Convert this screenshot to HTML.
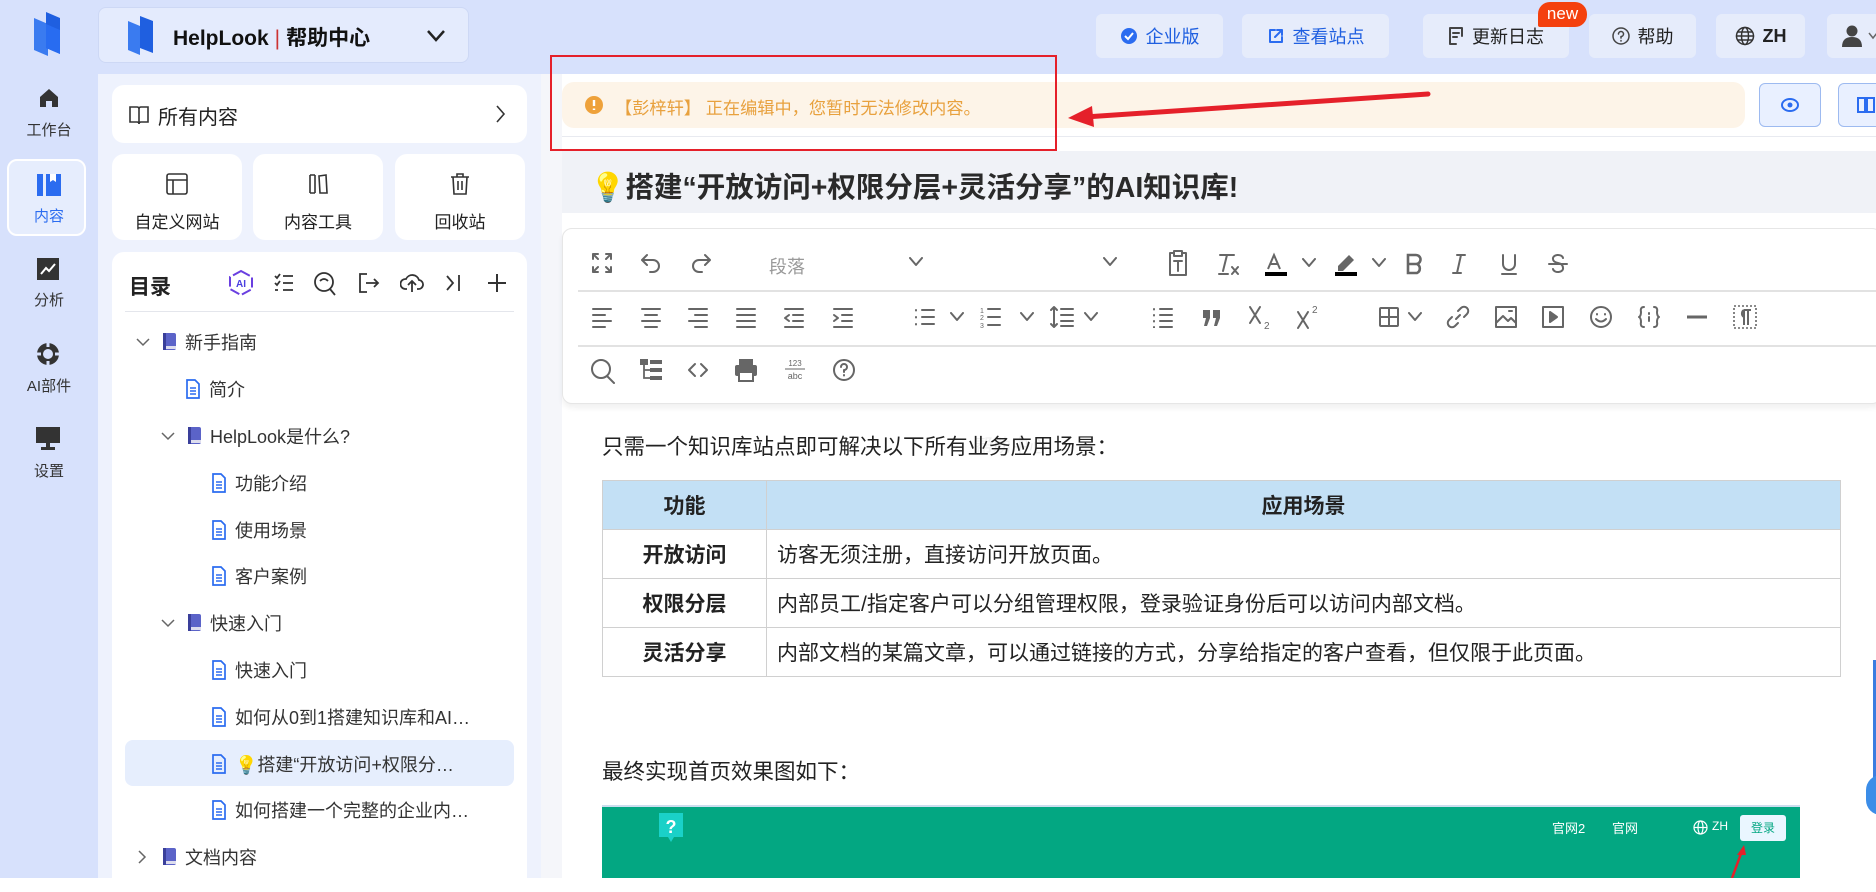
<!DOCTYPE html>
<html><head><meta charset="utf-8">
<style>
*{box-sizing:border-box;margin:0;padding:0}
body{width:1876px;height:878px;overflow:hidden;position:relative;background:#fff;font-family:"Liberation Sans","Noto Sans CJK SC",sans-serif;color:#222}
.a{position:absolute}
.rail{left:0;top:0;width:98px;height:878px;background:#d7e1fc}
.top{left:98px;top:0;width:1778px;height:74px;background:#d7e1fc}
.ri{width:98px;text-align:center;font-size:15px;color:#333}
.hb{top:14px;height:44px;background:#e6ecfb;border-radius:6px;font-size:18px;display:flex;align-items:center;justify-content:center;gap:8px;color:#222}
.side{left:98px;top:74px;width:443px;height:804px;background:#eef2fd}
.card{background:#fff;border-radius:12px}
.tr{height:46.8px;display:flex;align-items:center;font-size:18px;color:#333;white-space:nowrap}
.tb svg{position:absolute}
.ic{stroke:#666;fill:none;stroke-width:2;stroke-linecap:round;stroke-linejoin:round}
table{border-collapse:collapse;font-size:21px}
td{border:1.5px solid #d0d0d0;height:49px;padding:0 10px}
</style></head><body>
<div class="a rail"></div>
<div class="a top"></div>
<svg class="a" style="left:28px;top:10px" width="40" height="50" viewBox="0 0 40 50"><path d="M6 8 L20 14 L20 46 L6 40Z" fill="#3a7bf0"/><path d="M18 2 L32 8 L32 44 L18 38Z" fill="#1f5fe0"/><path d="M18 14 L32 20 L32 44 L18 38Z" fill="#2a6ff5" opacity=".8"/></svg>
<svg class="a" style="left:37px;top:86px" width="24" height="24" viewBox="0 0 24 24"><path d="M3 11 L12 3 L21 11 V21 H15 V15 H9 V21 H3Z" fill="#333"/></svg>
<div class="a ri" style="top:119px">工作台</div>
<div class="a" style="left:7px;top:159px;width:79px;height:77px;background:#e6edfd;border:2px solid #fff;border-radius:10px"></div>
<svg class="a" style="left:35px;top:172px" width="28" height="26" viewBox="0 0 28 26"><rect x="2" y="2" width="6" height="22" fill="#2b6cf0"/><path d="M11 2 H26 V24 H11Z" fill="#2b6cf0"/><path d="M15 2 V10 L18 8 L21 10 V2" fill="#fff"/></svg>
<div class="a ri" style="top:205px;color:#2b6cf0">内容</div>
<svg class="a" style="left:36px;top:257px" width="24" height="24" viewBox="0 0 24 24"><rect x="1" y="1" width="22" height="22" fill="#333"/><path d="M5 17 L10 11 L13 14 L19 7" stroke="#fff" stroke-width="2" fill="none"/></svg>
<div class="a ri" style="top:289px">分析</div>
<svg class="a" style="left:35px;top:341px" width="26" height="26" viewBox="0 0 26 26"><circle cx="13" cy="13" r="11" fill="#333"/><circle cx="13" cy="13" r="5" fill="#d7e1fc"/><path d="M13 0 V6 M13 20 V26 M0 13 H6 M20 13 H26" stroke="#d7e1fc" stroke-width="3"/></svg>
<div class="a ri" style="top:375px">AI部件</div>
<svg class="a" style="left:35px;top:425px" width="26" height="26" viewBox="0 0 26 26"><rect x="1" y="2" width="24" height="16" fill="#333"/><rect x="11" y="18" width="4" height="4" fill="#333"/><rect x="6" y="22" width="14" height="3" fill="#333"/></svg>
<div class="a ri" style="top:460px">设置</div>

<div class="a" style="left:98px;top:7px;width:371px;height:56px;background:#e4ebfd;border:1px solid #cdd8f5;border-radius:8px"></div>
<svg class="a" style="left:124px;top:15px" width="34" height="42" viewBox="0 0 34 42"><path d="M4 6 L16 11 L16 40 L4 35Z" fill="#3a7bf0"/><path d="M16 1 L29 6 L29 38 L16 33Z" fill="#1f5fe0"/></svg>
<div class="a" style="left:173px;top:22px;font-size:21px;font-weight:bold;color:#111">HelpLook<span style="font-weight:normal;color:#c33;margin:0 6px">|</span>帮助中心</div>
<svg class="a" style="left:425px;top:28px" width="22" height="16" viewBox="0 0 22 16"><path d="M3 3 L11 12 L19 3" stroke="#222" stroke-width="2.5" fill="none"/></svg>

<div class="a hb" style="left:1096px;width:127px;color:#1f5fe0"><svg width="18" height="18"><circle cx="9" cy="9" r="8" fill="#2b6cf0"/><path d="M5 9 L8 12 L13 6" stroke="#fff" stroke-width="2" fill="none"/></svg>企业版</div>
<div class="a hb" style="left:1242px;width:147px;color:#1f5fe0"><svg width="18" height="18" class="ic" style="stroke:#2b6cf0"><path d="M8 3 H3 V15 H15 V10 M10 3 H15 V8 M15 3 L8 10"/></svg>查看站点</div>
<div class="a hb" style="left:1423px;width:146px"><svg width="16" height="20" class="ic" style="stroke:#444"><path d="M2 2 H14 V10 M2 2 V18 H8 M5 7 H11 M5 11 H9"/></svg>更新日志</div>
<div class="a" style="left:1538px;top:2px;width:49px;height:25px;background:#f4400e;border-radius:12px 12px 12px 2px;color:#fff;font-size:17px;text-align:center;line-height:24px">new</div>
<div class="a hb" style="left:1589px;width:107px"><svg width="18" height="18" class="ic" style="stroke:#444;stroke-width:1.5"><circle cx="9" cy="9" r="8"/><path d="M6.5 7 A2.5 2.5 0 1 1 9 9.5 V11 M9 13.5 V14"/></svg>帮助</div>
<div class="a hb" style="left:1716px;width:89px;font-weight:bold"><svg width="20" height="20" class="ic" style="stroke:#333;stroke-width:1.5"><circle cx="10" cy="10" r="8.5"/><ellipse cx="10" cy="10" rx="3.5" ry="8.5"/><path d="M1.5 10 H18.5 M3 6 H17 M3 14 H17"/></svg>ZH</div>
<div class="a hb" style="left:1827px;width:60px;justify-content:flex-start;padding-left:14px;gap:4px"><svg width="22" height="24"><circle cx="11" cy="7" r="5.5" fill="#444"/><path d="M1 23 Q1 13 11 13 Q21 13 21 23Z" fill="#444"/></svg><svg width="12" height="10"><path d="M2 2 L6 7 L10 2" stroke="#666" stroke-width="1.5" fill="none"/></svg></div>

<div class="a side"></div>
<div class="a card" style="left:112px;top:85px;width:415px;height:58px"></div>
<svg class="a" style="left:128px;top:104px" width="22" height="22"><path d="M2 3 H9 Q11 3 11 5 V20 Q11 18 9 18 H2Z M20 3 H13 Q11 3 11 5 V20 Q11 18 13 18 H20Z" stroke="#333" stroke-width="1.6" fill="none"/></svg>
<div class="a" style="left:158px;top:101px;font-size:20px;color:#222">所有内容</div>
<svg class="a" style="left:494px;top:104px" width="12" height="20"><path d="M3 2 L10 10 L3 18" stroke="#333" stroke-width="1.6" fill="none"/></svg>

<div class="a card" style="left:112px;top:154px;width:130px;height:86px"></div>
<div class="a card" style="left:253px;top:154px;width:130px;height:86px"></div>
<div class="a card" style="left:395px;top:154px;width:130px;height:86px"></div>
<svg class="a" style="left:165px;top:172px" width="24" height="24"><rect x="2" y="2" width="20" height="20" rx="2" stroke="#333" stroke-width="1.6" fill="none"/><path d="M2 8 H22 M8 8 V22" stroke="#333" stroke-width="1.6"/></svg>
<svg class="a" style="left:306px;top:172px" width="24" height="24"><path d="M4 3 V21 M9 3 V21 M13 4 L20 3 L21 21 L14 21Z M4 3 H9 M4 21 H9" stroke="#333" stroke-width="1.6" fill="none"/></svg>
<svg class="a" style="left:448px;top:172px" width="24" height="24"><path d="M3 5 H21 M9 5 V2 H15 V5 M5 5 L6 22 H18 L19 5 M10 9 V18 M14 9 V18" stroke="#333" stroke-width="1.6" fill="none"/></svg>
<div class="a" style="left:112px;top:208px;width:130px;text-align:center;font-size:17px">自定义网站</div>
<div class="a" style="left:253px;top:208px;width:130px;text-align:center;font-size:17px">内容工具</div>
<div class="a" style="left:395px;top:208px;width:130px;text-align:center;font-size:17px">回收站</div>

<div class="a card" style="left:112px;top:252px;width:415px;height:640px"></div>
<div class="a" style="left:129px;top:271px;font-size:21px;font-weight:bold">目录</div>
<svg class="a" style="left:227px;top:269px" width="28" height="28"><path d="M14 2 L25 8 V20 L14 26 L3 20 V8Z" stroke="#6a3fe0" stroke-width="2" fill="none" stroke-dasharray="10 3"/><text x="14" y="18" font-size="10" font-weight="bold" text-anchor="middle" fill="#4a3fe0" font-family="Liberation Sans">AI</text></svg>
<svg class="a" style="left:272px;top:271px" width="24" height="24"><path d="M3 5 L5 7 L8 3 M11 5 H21 M11 12 H21 M11 19 H21 M3 12 L5 14 L8 10 M3 19 H6" stroke="#333" stroke-width="1.8" fill="none"/></svg>
<svg class="a" style="left:313px;top:271px" width="24" height="26"><circle cx="11" cy="11" r="9" stroke="#333" stroke-width="1.8" fill="none"/><path d="M17 18 L22 24 M7 10 Q11 6 15 10" stroke="#333" stroke-width="1.8" fill="none"/></svg>
<svg class="a" style="left:357px;top:271px" width="24" height="24"><path d="M10 3 H3 V21 H10 M9 12 H21 M17 8 L21 12 L17 16" stroke="#333" stroke-width="1.8" fill="none"/></svg>
<svg class="a" style="left:400px;top:271px" width="24" height="24"><path d="M7 18 H5 A5 5 0 0 1 6 8 A7 7 0 0 1 19 9 A4 4 0 0 1 18 18 H17 M12 21 V11 M8 14 L12 10 L16 14" stroke="#333" stroke-width="1.8" fill="none"/></svg>
<svg class="a" style="left:443px;top:271px" width="22" height="24"><path d="M4 5 L10 12 L4 19 M16 4 V20" stroke="#333" stroke-width="1.8" fill="none"/></svg>
<svg class="a" style="left:486px;top:272px" width="22" height="22"><path d="M11 2 V20 M2 11 H20" stroke="#333" stroke-width="2" fill="none"/></svg>
<div class="a" style="left:125px;top:311px;width:389px;height:1px;background:#e4e6ec"></div>
<div class="a" style="left:125px;top:740px;width:389px;height:46px;background:#e6eefd;border-radius:8px"></div>

<div class="a" style="left:125px;top:319px;width:400px">
<svg width="0" height="0" style="position:absolute"><defs>
<g id="bk"><rect x="1" y="1" width="13" height="17" rx="2" fill="#5b63c8"/><rect x="3" y="14" width="11" height="3" fill="#dde"/><rect x="1" y="1" width="3" height="17" fill="#3a3f9a"/></g>
<g id="dc"><path d="M2 1 H10 L14 5 V19 H2Z" fill="none" stroke="#2b6cf0" stroke-width="1.7"/><path d="M5 9 H11 M5 12 H11 M5 15 H11" stroke="#2b6cf0" stroke-width="1.5"/></g>
<path id="dn" d="M2 2 L8 8 L14 2" fill="none" stroke="#666" stroke-width="1.5"/>
</defs></svg>
<div class="tr"><svg style="margin-left:10px" width="16" height="10"><use href="#dn"/></svg><svg style="margin-left:11px" width="16" height="20"><use href="#bk"/></svg><span style="margin-left:7px">新手指南</span></div>
<div class="tr"><svg style="margin-left:60px" width="16" height="20"><use href="#dc"/></svg><span style="margin-left:8px">简介</span></div>
<div class="tr"><svg style="margin-left:35px" width="16" height="10"><use href="#dn"/></svg><svg style="margin-left:11px" width="16" height="20"><use href="#bk"/></svg><span style="margin-left:7px">HelpLook是什么?</span></div>
<div class="tr"><svg style="margin-left:86px" width="16" height="20"><use href="#dc"/></svg><span style="margin-left:8px">功能介绍</span></div>
<div class="tr"><svg style="margin-left:86px" width="16" height="20"><use href="#dc"/></svg><span style="margin-left:8px">使用场景</span></div>
<div class="tr"><svg style="margin-left:86px" width="16" height="20"><use href="#dc"/></svg><span style="margin-left:8px">客户案例</span></div>
<div class="tr"><svg style="margin-left:35px" width="16" height="10"><use href="#dn"/></svg><svg style="margin-left:11px" width="16" height="20"><use href="#bk"/></svg><span style="margin-left:7px">快速入门</span></div>
<div class="tr"><svg style="margin-left:86px" width="16" height="20"><use href="#dc"/></svg><span style="margin-left:8px">快速入门</span></div>
<div class="tr"><svg style="margin-left:86px" width="16" height="20"><use href="#dc"/></svg><span style="margin-left:8px">如何从0到1搭建知识库和AI…</span></div>
<div class="tr"><svg style="margin-left:86px" width="16" height="20"><use href="#dc"/></svg><span style="margin-left:8px">💡搭建“开放访问+权限分…</span></div>
<div class="tr"><svg style="margin-left:86px" width="16" height="20"><use href="#dc"/></svg><span style="margin-left:8px">如何搭建一个完整的企业内…</span></div>
<div class="tr"><svg style="margin-left:12px" width="10" height="16"><path d="M2 2 L8 8 L2 14" fill="none" stroke="#666" stroke-width="1.5"/></svg><svg style="margin-left:15px" width="16" height="20"><use href="#bk"/></svg><span style="margin-left:7px">文档内容</span></div>
</div>

<div class="a" style="left:541px;top:74px;width:21px;height:804px;background:#f5f6fa"></div>
<div class="a" style="left:562px;top:82px;width:1183px;height:46px;background:#fdf4e8;border-radius:12px"></div>
<svg class="a" style="left:584px;top:95px" width="20" height="20"><circle cx="10" cy="10" r="9" fill="#eea13a"/><path d="M10 5 V11 M10 13.5 V15" stroke="#fff" stroke-width="2.4"/></svg>
<div class="a" style="left:615px;top:94px;font-size:17.2px;color:#e8a13e">【彭梓轩】 正在编辑中，您暂时无法修改内容。</div>
<div class="a" style="left:562px;top:136px;width:1314px;height:1px;background:#e8eaf0"></div>
<div class="a" style="left:1759px;top:83px;width:62px;height:44px;background:#e9f0ff;border:1.5px solid #9dbaf0;border-radius:6px"></div>
<svg class="a" style="left:1780px;top:96px" width="20" height="18"><ellipse cx="10" cy="9" rx="8" ry="6" stroke="#2b6cf0" stroke-width="2" fill="none"/><circle cx="10" cy="9" r="2.5" fill="#2b6cf0"/></svg>
<div class="a" style="left:1838px;top:83px;width:60px;height:44px;background:#e9f0ff;border:1.5px solid #9dbaf0;border-radius:6px"></div>
<svg class="a" style="left:1856px;top:95px" width="20" height="20"><path d="M2 3 H9 V17 H2Z M11 3 H18 V17 H11Z" stroke="#2b6cf0" stroke-width="2" fill="none"/></svg>
<div class="a" style="left:550px;top:55px;width:507px;height:96px;border:2px solid #e5202a"></div>
<svg class="a" style="left:1060px;top:80px" width="380" height="50"><path d="M368 14 L25 37" stroke="#e5202a" stroke-width="5" stroke-linecap="round"/><path d="M8 38 L32 26 L34 47Z" fill="#e5202a"/></svg>

<div class="a" style="left:562px;top:151px;width:1314px;height:62px;background:#f0f2f7"></div>
<div class="a" style="left:590px;top:165px;font-size:28.5px;font-weight:bold;color:#2a2a2a;white-space:nowrap">💡搭建“开放访问+权限分层+灵活分享”的AI知识库!</div>

<div class="a" style="left:562px;top:228px;width:1320px;height:176px;background:#fff;border:1px solid #e6e6e6;border-radius:10px;box-shadow:0 4px 6px rgba(0,0,0,.06)"></div>
<div class="a" style="left:578px;top:290px;width:1298px;height:1.5px;background:#e2e2e2"></div>
<div class="a" style="left:578px;top:345px;width:1298px;height:1.5px;background:#e2e2e2"></div>
<div class="tb">
<svg style="left:590px;top:251px" width="24" height="24" class="ic"><path d="M3 8 V3 H8 M16 3 H21 V8 M21 16 V21 H16 M8 21 H3 V16 M3 3 L8 8 M21 3 L16 8 M21 21 L16 16 M3 21 L8 16"/></svg>
<svg style="left:639px;top:251px" width="24" height="24" class="ic"><path d="M8 4 L3 9 L8 14 M3 9 H14 A6 6 0 0 1 14 21 H11"/></svg>
<svg style="left:689px;top:251px" width="24" height="24" class="ic"><path d="M16 4 L21 9 L16 14 M21 9 H10 A6 6 0 0 0 10 21 H13"/></svg>
<div class="a" style="left:769px;top:253px;font-size:18px;color:#999">段落</div>
<svg style="left:909px;top:257px" width="14" height="10" class="ic"><path d="M1 1 L7 8 L13 1"/></svg>
<svg style="left:1103px;top:257px" width="14" height="10" class="ic"><path d="M1 1 L7 8 L13 1"/></svg>
<svg style="left:1166px;top:249px" width="24" height="28" class="ic"><path d="M8 4 H4 V26 H20 V4 H16 M8 2 H16 V7 H8Z M8 12 H16 M12 12 V22"/></svg>
<svg style="left:1216px;top:251px" width="24" height="26" class="ic"><path d="M4 4 H18 M11 4 L7 20 M3 23 H12 M16 16 L22 23 M22 16 L16 23"/></svg>
<svg style="left:1263px;top:252px" width="24" height="26"><path d="M5 17 L11 3 L17 17 M7.5 12 H14.5" stroke="#666" stroke-width="2" fill="none"/><rect x="2" y="20" width="22" height="4" fill="#000"/></svg>
<svg style="left:1302px;top:258px" width="14" height="10" class="ic"><path d="M1 1 L7 8 L13 1"/></svg>
<svg style="left:1333px;top:250px" width="26" height="28"><path d="M5 16 L16 5 L21 10 L10 21 H5Z" fill="#666"/><rect x="2" y="22" width="22" height="4" fill="#000"/></svg>
<svg style="left:1372px;top:258px" width="14" height="10" class="ic"><path d="M1 1 L7 8 L13 1"/></svg>
<svg style="left:1403px;top:252px" width="22" height="24"><path d="M5 3 H13 A4.5 4.5 0 0 1 13 12 H5Z M5 12 H14 A5 5 0 0 1 14 21 H5Z" stroke="#666" stroke-width="2.6" fill="none"/></svg>
<svg style="left:1449px;top:252px" width="20" height="24" class="ic"><path d="M8 3 H16 M4 21 H12 M12 3 L8 21"/></svg>
<svg style="left:1498px;top:252px" width="22" height="24" class="ic"><path d="M5 3 V12 A6 6 0 0 0 17 12 V3 M4 22 H18"/></svg>
<svg style="left:1546px;top:252px" width="24" height="24" class="ic"><path d="M17 6 A5 3.5 0 0 0 7 7 Q7 10 12 11 Q17 12 17 16 A5 3.5 0 0 1 7 17 M3 12 H21"/></svg>
<svg style="left:590px;top:306px" width="24" height="22" class="ic"><path d="M3 3 H21 M3 9 H15 M3 15 H21 M3 21 H15"/></svg>
<svg style="left:639px;top:306px" width="24" height="22" class="ic"><path d="M3 3 H21 M6 9 H18 M3 15 H21 M6 21 H18"/></svg>
<svg style="left:686px;top:306px" width="24" height="22" class="ic"><path d="M3 3 H21 M9 9 H21 M3 15 H21 M9 21 H21"/></svg>
<svg style="left:734px;top:306px" width="24" height="22" class="ic"><path d="M3 3 H21 M3 9 H21 M3 15 H21 M3 21 H21"/></svg>
<svg style="left:782px;top:306px" width="24" height="22" class="ic"><path d="M3 3 H21 M11 9 H21 M11 15 H21 M3 21 H21 M7 9 L3 12 L7 15"/></svg>
<svg style="left:831px;top:306px" width="24" height="22" class="ic"><path d="M3 3 H21 M11 9 H21 M11 15 H21 M3 21 H21 M3 9 L7 12 L3 15"/></svg>
<svg style="left:913px;top:306px" width="24" height="22" class="ic"><path d="M9 4 H21 M9 11 H21 M9 18 H21 M3 4 V4.5 M3 11 V11.5 M3 18 V18.5"/></svg>
<svg style="left:950px;top:312px" width="14" height="10" class="ic"><path d="M1 1 L7 8 L13 1"/></svg>
<svg style="left:979px;top:305px" width="24" height="24" class="ic"><path d="M9 4 H21 M9 12 H21 M9 20 H21"/><text x="1" y="8" font-size="7" fill="#666" stroke="none">1</text><text x="1" y="15" font-size="7" fill="#666" stroke="none">2</text><text x="1" y="23" font-size="7" fill="#666" stroke="none">3</text></svg>
<svg style="left:1020px;top:312px" width="14" height="10" class="ic"><path d="M1 1 L7 8 L13 1"/></svg>
<svg style="left:1049px;top:304px" width="26" height="26" class="ic"><path d="M5 3 V23 M2 6 L5 3 L8 6 M2 20 L5 23 L8 20 M12 5 H24 M12 11 H24 M12 17 H24 M12 22 H24"/></svg>
<svg style="left:1084px;top:312px" width="14" height="10" class="ic"><path d="M1 1 L7 8 L13 1"/></svg>
<svg style="left:1151px;top:306px" width="24" height="22" class="ic"><path d="M9 3 H21 M9 9 H21 M9 15 H21 M9 21 H21 M3 3 V3.5 M3 9 V9.5 M3 15 V15.5 M3 21 V21.5"/></svg>
<svg style="left:1200px;top:306px" width="24" height="22"><path d="M3 4 H10 V12 L7 20 H4 L6 12 H3Z M13 4 H20 V12 L17 20 H14 L16 12 H13Z" fill="#666"/></svg>
<svg style="left:1247px;top:303px" width="28" height="28" class="ic"><path d="M3 4 L13 20 M13 4 L3 20"/><text x="17" y="26" font-size="10" fill="#666" stroke="none">2</text></svg>
<svg style="left:1295px;top:303px" width="28" height="28" class="ic"><path d="M3 9 L13 25 M13 9 L3 25"/><text x="17" y="10" font-size="10" fill="#666" stroke="none">2</text></svg>
<svg style="left:1377px;top:305px" width="24" height="24" class="ic"><rect x="3" y="3" width="18" height="18" rx="1"/><path d="M3 12 H21 M12 3 V21"/></svg>
<svg style="left:1408px;top:312px" width="14" height="10" class="ic"><path d="M1 1 L7 8 L13 1"/></svg>
<svg style="left:1445px;top:304px" width="26" height="26" class="ic"><path d="M11 15 L15 11 M13 7 L16 4 A4 4 0 0 1 22 10 L19 13 M13 19 L10 22 A4 4 0 0 1 4 16 L7 13"/></svg>
<svg style="left:1493px;top:304px" width="26" height="26" class="ic"><rect x="3" y="3" width="20" height="20"/><path d="M3 19 L10 12 L15 17 L18 14 L23 19 M16 7 L19 7"/></svg>
<svg style="left:1540px;top:304px" width="26" height="26" class="ic"><rect x="3" y="3" width="20" height="20"/><path d="M10 8 L17 13 L10 18Z" fill="#666"/></svg>
<svg style="left:1588px;top:304px" width="26" height="26" class="ic"><circle cx="13" cy="13" r="10"/><path d="M8 15 Q13 20 18 15 M9 10 V10.5 M17 10 V10.5"/></svg>
<svg style="left:1636px;top:304px" width="26" height="26" class="ic"><path d="M8 3 Q4 3 5 8 Q5 12 3 13 Q5 14 5 18 Q4 23 8 23 M18 3 Q22 3 21 8 Q21 12 23 13 Q21 14 21 18 Q22 23 18 23 M13 9 V10 M13 13 V17"/></svg>
<svg style="left:1684px;top:304px" width="26" height="26"><path d="M3 13 H23" stroke="#666" stroke-width="3"/></svg>
<svg style="left:1732px;top:304px" width="26" height="26"><rect x="2" y="2" width="22" height="22" fill="none" stroke="#666" stroke-width="1.6" stroke-dasharray="2 2"/><path d="M12 6 H19 M12 6 V21 M16 6 V21 M12 6 A4 4 0 0 0 12 13" stroke="#666" stroke-width="2" fill="none"/></svg>
<svg style="left:589px;top:357px" width="28" height="28" class="ic"><circle cx="12" cy="12" r="9"/><path d="M18 19 L25 26"/></svg>
<svg style="left:638px;top:357px" width="26" height="26"><rect x="2" y="2" width="8" height="6" fill="#666"/><rect x="12" y="3" width="12" height="4" fill="#666"/><rect x="12" y="11" width="12" height="4" fill="#666"/><rect x="12" y="19" width="12" height="4" fill="#666"/><path d="M6 8 V21 H12 M6 13 H12" stroke="#666" stroke-width="1.8" fill="none"/></svg>
<svg style="left:686px;top:358px" width="24" height="24" class="ic"><path d="M9 6 L3 12 L9 18 M15 6 L21 12 L15 18"/></svg>
<svg style="left:733px;top:357px" width="26" height="26"><rect x="6" y="2" width="14" height="6" fill="#666"/><rect x="2" y="8" width="22" height="11" rx="2" fill="#666"/><rect x="6" y="15" width="14" height="9" fill="#fff" stroke="#666" stroke-width="2"/></svg>
<svg style="left:782px;top:357px" width="26" height="26"><text x="13" y="9" font-size="8" text-anchor="middle" fill="#666" font-family="Liberation Sans">123</text><path d="M3 12 H23" stroke="#666" stroke-width="1"/><text x="13" y="22" font-size="9" text-anchor="middle" fill="#666" font-family="Liberation Sans">abc</text></svg>
<svg style="left:831px;top:357px" width="26" height="26" class="ic"><circle cx="13" cy="13" r="10"/><path d="M10 10 A3 3 0 1 1 13 13 V15 M13 18 V18.5"/></svg>
</div>

<div class="a" style="left:975px;top:432px;font-size:18px;color:#eee">帮助中心</div>
<div class="a" style="left:602px;top:430px;font-size:21.5px;color:#222">只需一个知识库站点即可解决以下所有业务应用场景：</div>
<table class="a" style="left:602px;top:480px;width:1239px">
<tr style="background:#c3e0f5;font-weight:bold"><td style="width:164px;text-align:center">功能</td><td style="text-align:center">应用场景</td></tr>
<tr><td style="text-align:center;font-weight:bold">开放访问</td><td>访客无须注册，直接访问开放页面。</td></tr>
<tr><td style="text-align:center;font-weight:bold">权限分层</td><td>内部员工/指定客户可以分组管理权限，登录验证身份后可以访问内部文档。</td></tr>
<tr><td style="text-align:center;font-weight:bold">灵活分享</td><td>内部文档的某篇文章，可以通过链接的方式，分享给指定的客户查看，但仅限于此页面。</td></tr>
</table>
<div class="a" style="left:602px;top:755px;font-size:21.5px;color:#222">最终实现首页效果图如下：</div>
<div class="a" style="left:602px;top:805px;width:1198px;height:73px;background:#03a782;border-top:2px solid #cde"></div>
<svg class="a" style="left:657px;top:811px" width="28" height="34"><path d="M2 2 H26 V26 H17 L14 31 L11 26 H2Z" fill="#1ad1c8"/><text x="14" y="22" font-size="18" font-weight="bold" text-anchor="middle" fill="#fff" font-family="Liberation Sans">?</text></svg>
<div class="a" style="left:1552px;top:818px;font-size:13px;color:#fff">官网2</div>
<div class="a" style="left:1612px;top:818px;font-size:13px;color:#fff">官网</div>
<svg class="a" style="left:1693px;top:820px" width="15" height="15"><circle cx="7.5" cy="7.5" r="6.5" stroke="#fff" stroke-width="1.2" fill="none"/><ellipse cx="7.5" cy="7.5" rx="2.5" ry="6.5" stroke="#fff" stroke-width="1.2" fill="none"/><path d="M1 7.5 H14" stroke="#fff" stroke-width="1.2"/></svg>
<div class="a" style="left:1712px;top:819px;font-size:12px;color:#fff">ZH</div>
<div class="a" style="left:1740px;top:815px;width:46px;height:26px;background:#eaf6ff;border-radius:3px;font-size:12px;color:#03a782;text-align:center;line-height:26px">登录</div>
<svg class="a" style="left:1728px;top:843px" width="30" height="35"><path d="M4 35 L14 8" stroke="#e5202a" stroke-width="2.5"/><path d="M16 2 L9 12 L18 12Z" fill="#e5202a"/></svg>
<div class="a" style="left:1873px;top:660px;width:3px;height:120px;background:#3b7de0"></div>
<div class="a" style="left:1866px;top:775px;width:30px;height:40px;border-radius:20px;background:#3b8de8"></div>
</body></html>
